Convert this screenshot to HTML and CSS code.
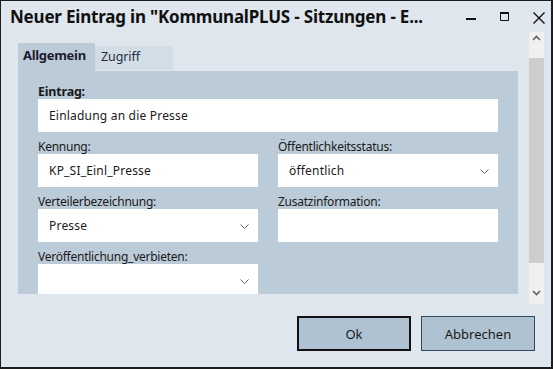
FILE: index.html
```html
<!DOCTYPE html>
<html lang="de">
<head>
    <meta charset="UTF-8">
    <meta name="viewport" content="width=device-width, initial-scale=1.0">
    <title>Neuer Eintrag</title>
    <link rel="stylesheet" href="styles.css">
</head>
<body>
    <div class="window">
        <div class="titlebar">
            <h1 class="title">Neuer Eintrag in "KommunalPLUS - Sitzungen - E...</h1>
            <div class="controls">
                <svg class="ctl-min" width="10" height="10" viewBox="0 0 10 10"><rect x="0" y="5" width="10" height="2" fill="#111"/></svg>
                <svg class="ctl-max" width="9" height="9" viewBox="0 0 9 9"><path d="M0.5 1.5 H8.5 V8.5 H0.5 Z" fill="none" stroke="#111" stroke-width="1"/><rect x="0" y="0" width="9" height="2" fill="#111"/></svg>
                <svg class="ctl-close" width="12" height="12" viewBox="0 0 12 12"><path d="M0.5 0.5 L11.5 11.5 M11.5 0.5 L0.5 11.5" stroke="#111" stroke-width="1.4"/></svg>
            </div>
        </div>

        <div class="main">
            <div class="tabs-area">
                <div class="tabs">
                    <div class="tab active">Allgemein</div>
                    <div class="tab">Zugriff</div>
                </div>
                <div class="panel">
                    <div class="fields">
                        <div class="field wide">
                            <label class="bold">Eintrag:</label>
                            <div class="input">Einladung an die Presse</div>
                        </div>
                        <div class="field">
                            <label>Kennung:</label>
                            <div class="input">KP_SI_Einl_Presse</div>
                        </div>
                        <div class="field">
                            <label>Öffentlichkeitsstatus:</label>
                            <div class="input select">öffentlich
                                <svg class="chevron" width="9" height="5" viewBox="0 0 9 5"><polyline points="0.5,0.5 4.5,4.5 8.5,0.5" fill="none" stroke="#666" stroke-width="1"/></svg>
                            </div>
                        </div>
                        <div class="field">
                            <label>Verteilerbezeichnung:</label>
                            <div class="input select">Presse
                                <svg class="chevron" width="9" height="5" viewBox="0 0 9 5"><polyline points="0.5,0.5 4.5,4.5 8.5,0.5" fill="none" stroke="#666" stroke-width="1"/></svg>
                            </div>
                        </div>
                        <div class="field">
                            <label>Zusatzinformation:</label>
                            <div class="input"></div>
                        </div>
                        <div class="field">
                            <label>Veröffentlichung_verbieten:</label>
                            <div class="input select">
                                <svg class="chevron" width="9" height="5" viewBox="0 0 9 5"><polyline points="0.5,0.5 4.5,4.5 8.5,0.5" fill="none" stroke="#666" stroke-width="1"/></svg>
                            </div>
                        </div>
                    </div>
                </div>
            </div>
            <div class="scrollbar">
                <div class="arrow up">
                    <svg width="9" height="6" viewBox="0 0 9 6"><polyline points="1,5 4.5,1.5 8,5" fill="none" stroke="#606060" stroke-width="1.6"/></svg>
                </div>
                <div class="thumb"></div>
                <div class="track"></div>
                <div class="arrow down">
                    <svg width="9" height="6" viewBox="0 0 9 6"><polyline points="1,1 4.5,4.5 8,1" fill="none" stroke="#606060" stroke-width="1.6"/></svg>
                </div>
            </div>
        </div>

        <div class="buttons">
            <button class="btn default">Ok</button>
            <button class="btn">Abbrechen</button>
        </div>
    </div>
</body>
</html>
```

FILE: styles.css
```css
body {
    margin: 0;
    padding: 0;
    font-family: "Noto Sans", "Open Sans", sans-serif;
    font-size: 12px;
    color: #1a1a1a;
}
.window {
    width: 553px;
    height: 369px;
    box-sizing: border-box;
    border-style: solid;
    border-color: #1c1c1c;
    border-width: 1px 2px 2px 1px;
    background-color: #dfe6ed;
    overflow: hidden;
}
.titlebar {
    display: flex;
    align-items: center;
    height: 31px;
    padding-left: 9px;
}
.title {
    flex: 1;
    margin: 0;
    font-size: 17px;
    font-weight: bold;
    color: #111;
    white-space: nowrap;
    letter-spacing: -0.2px;
}
.controls {
    display: flex;
    align-items: center;
    padding-right: 6px;
}
.ctl-min {
    margin-top: 3px;
}
.ctl-max {
    margin-left: 24px;
    margin-top: -1px;
}
.ctl-close {
    margin-left: 24px;
    margin-top: 2px;
}
.main {
    display: flex;
}
.tabs-area {
    width: 500px;
    margin-left: 17px;
    padding-top: 11px;
}
.tabs {
    display: flex;
    height: 28px;
}
.tab {
    box-sizing: border-box;
    width: 78px;
    height: 24px;
    margin-top: 3px;
    padding: 2px 0 0 6px;
    line-height: 18px;
    font-size: 12.5px;
    letter-spacing: -0.1px;
    background-color: #d2dde6;
    color: #2b2b45;
}
.tab.active {
    width: 77px;
    height: 28px;
    margin-top: 0;
    padding: 3px 0 0 5px;
    font-size: 13px;
    font-weight: bold;
    letter-spacing: -0.3px;
    color: #1c1c2e;
    background-color: #bccbd8;
}
.panel {
    height: 223px;
    box-sizing: border-box;
    padding: 14px 20px 0;
    background-color: #bccbd8;
    overflow: hidden;
}
.fields {
    display: grid;
    grid-template-columns: 220px 220px;
    column-gap: 20px;
    row-gap: 8px;
}
.field.wide {
    grid-column: 1 / 3;
}
label {
    display: block;
    height: 14px;
    line-height: 14px;
    font-size: 12px;
    letter-spacing: -0.25px;
}
label.bold {
    font-size: 12.5px;
    font-weight: bold;
    letter-spacing: -0.2px;
}
.input {
    position: relative;
    height: 33px;
    box-sizing: border-box;
    padding-left: 11px;
    line-height: 33px;
    background-color: #fff;
    font-size: 12px;
    letter-spacing: 0.2px;
}
.chevron {
    position: absolute;
    right: 9px;
    top: 15px;
}
.scrollbar {
    display: flex;
    flex-direction: column;
    width: 15px;
    height: 272px;
    margin-left: 11px;
    background-color: #f0f0f0;
}
.arrow {
    display: flex;
    justify-content: center;
}
.arrow.up {
    height: 26px;
    padding-top: 3px;
    box-sizing: border-box;
}
.thumb {
    height: 205px;
    background-color: #cdcdcd;
}
.track {
    flex: 1;
}
.arrow.down {
    height: 14px;
}
.buttons {
    display: flex;
    justify-content: flex-end;
    gap: 10px;
    margin-top: 12px;
    padding-right: 16px;
}
.btn {
    width: 114px;
    height: 35px;
    box-sizing: border-box;
    background-color: #afc2d2;
    border: 1px solid #34495e;
    font-family: "Noto Sans", "Open Sans", sans-serif;
    font-size: 13px;
    color: #1a1a1a;
    padding: 0;
}
.btn.default {
    border: 2px solid #111;
}
```
